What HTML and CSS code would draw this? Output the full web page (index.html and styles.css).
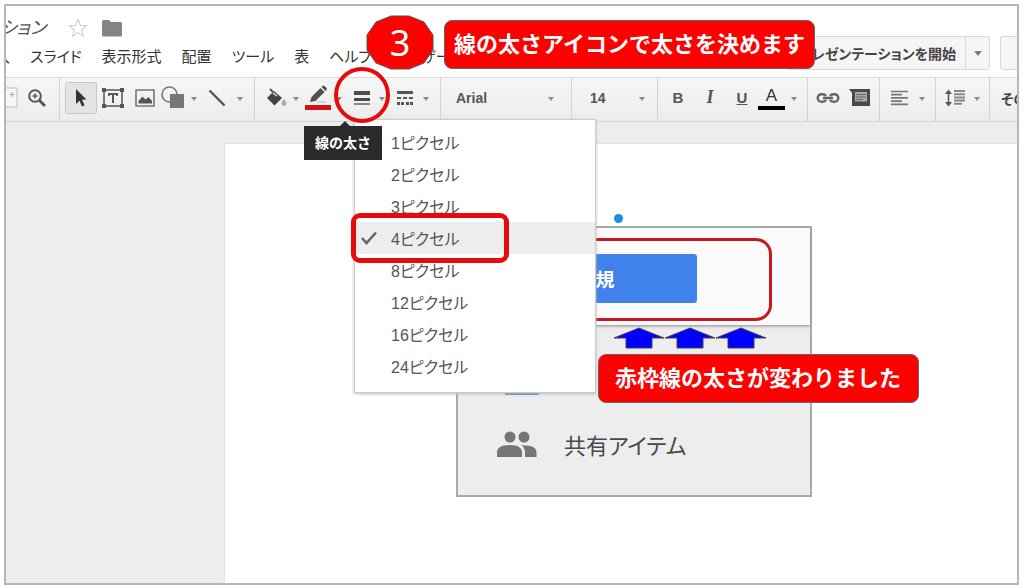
FILE: index.html
```html
<!DOCTYPE html>
<html lang="ja">
<head>
<meta charset="utf-8">
<title>線の太さ</title>
<link rel="stylesheet" href="styles.css">
</head>
<body>
<svg class="defs" aria-hidden="true">
  <symbol id="caret" viewBox="0 0 6 4"><path d="M0 0h6L3 4z" fill="#8a8a8a"/></symbol>
</svg>
<main class="frame">
  <header class="header">
    <div class="header-left">
      <div class="title-row">
        <div class="title"><span>ション</span></div>
        <button class="plain" aria-label="スター"><svg width="20" height="20" viewBox="0 0 20 20"><path d="M10 1.5l2.3 5.8 6.200.5-4.800 4 1.500 6.100L10 14.600 4.800 17.900l1.500-6.100-4.800-4 6.200-.5z" fill="#fff" stroke="#cfcfcf" stroke-width="1.200"/></svg></button>
        <button class="plain" aria-label="フォルダ"><svg width="20" height="18" viewBox="0 0 20 18"><path d="M0 2.500Q0 1 1.500 1H7l2 2h9.500Q20 3 20 4.500V16q0 1.500-1.500 1.500h-17Q0 17.500 0 16z" fill="#848484"/></svg></button>
      </div>
      <nav class="menubar">
        <button class="menu-clip"><span>入</span></button>
        <button>スライド</button>
        <button>表示形式</button>
        <button>配置</button>
        <button>ツール</button>
        <button>表</button>
        <button>ヘルプ</button>
        <button>ユーザー</button>
      </nav>
    </div>
    <div class="actions">
      <div class="split">
        <button class="present">プレゼンテーションを開始</button>
        <button class="present-more" aria-label="その他の開始方法"><svg width="8" height="5" viewBox="0 0 6 4"><path d="M0 0h6L3 4z" fill="#777"/></svg></button>
      </div>
      <button class="share" aria-label="共有"></button>
    </div>
  </header>

  <div class="toolbar" role="toolbar">
    <div class="group g-zoom">
      <button class="tool w-edge" aria-label="新しいスライド"><svg width="12" height="22" viewBox="0 0 12 22"><path d="M-1 1h12v19H-1" fill="#f7f7f7" stroke="#bdbdbd"/><path d="M6 5v5M3.500 7.500h5" stroke="#aaa"/></svg></button>
      <button class="tool" aria-label="ズーム"><svg width="20" height="20" viewBox="0 0 20 20" fill="none" stroke="#555"><circle cx="8" cy="8" r="5.800" stroke-width="2"/><path d="M12.500 12.500L18 18" stroke-width="2.800"/><path d="M8 5.500v5M5.500 8h5" stroke-width="1.500"/></svg></button>
    </div>
    <div class="group g-insert">
      <button class="tool selected" aria-label="選択"><svg width="14" height="20" viewBox="0 0 14 20"><path d="M2 1v15l3.500-3.200L8 18.500l2.600-1.200L8 11.800l4.500-.3z" fill="#333"/></svg></button>
      <button class="tool" aria-label="テキスト ボックス"><svg width="24" height="22" viewBox="0 0 24 22"><path d="M3 3h18v16H3z" fill="none" stroke="#555" stroke-width="1.500"/><g fill="#555"><path d="M1 1h4v4H1zM19 1h4v4h-4zM1 17h4v4H1zM19 17h4v4h-4z"/><path d="M7 6h10v3h-1.500l-.5-1h-2v8h-2V8H9l-.5 1H7z"/></g></svg></button>
      <button class="tool" aria-label="画像"><svg width="20" height="18" viewBox="0 0 20 18"><path d="M1 1h18v16H1z" fill="none" stroke="#777" stroke-width="1.600"/><path d="M3.500 14.500V12l4-4.500 3 3 3-2.500 3.500 4v2.500z" fill="#555"/></svg></button>
      <button class="tool has-caret w-shape" aria-label="図形"><svg width="24" height="23" viewBox="0 0 24 23"><path d="M9 8h14v14H9z" fill="#777"/><circle cx="8.500" cy="8.500" r="7.500" fill="none" stroke="#777" stroke-width="1.600"/></svg><svg class="caret"><use href="#caret"/></svg></button>
      <button class="tool has-caret w-line" aria-label="線"><svg width="20" height="20" viewBox="0 0 20 20"><path d="M2.500 2.500l15 15" stroke="#555" stroke-width="2.400"/></svg><svg class="caret"><use href="#caret"/></svg></button>
    </div>
    <div class="group g-style">
      <button class="tool has-caret w-fill" aria-label="塗りつぶし"><svg width="22" height="20" viewBox="0 0 22 20"><path d="M5 1l3 3" stroke="#555" stroke-width="2"/><path d="M9 3l8 7-7.500 7.500L2 10z" fill="#444"/><path d="M8 5l4 3" stroke="#eee" stroke-width="1.300"/><path d="M19 11q2.500 3 2.500 4.500a2.400 2.400 0 0 1-4.800 0Q16.700 14 19 11z" fill="#aaa"/></svg><svg class="caret"><use href="#caret"/></svg></button>
      <button class="tool has-caret w-pen" aria-label="線の色"><svg width="26" height="26" viewBox="0 0 26 26"><path d="M5 17l1.500-5L15.500 3l4 4-9 9z" fill="#505050"/><path d="M16.500 2l1-1q1-.8 2 0l2 2q.8 1 0 2l-1 1z" fill="#505050"/><path d="M12 17h9" stroke="#bbb"/><path d="M0 20h26v5H0z" fill="#cf1517"/></svg><svg class="caret"><use href="#caret"/></svg></button>
      <button class="tool has-caret w-weight" aria-label="線の太さ"><svg width="18" height="16" viewBox="0 0 18 16" fill="#4c4c4c"><path d="M1 1h16v4H1zM1 8h16v3H1z"/><path d="M1 13h16v2H1z" fill="#888"/></svg><svg class="caret"><use href="#caret"/></svg></button>
      <button class="tool has-caret w-dash" aria-label="線の種類"><svg width="18" height="16" viewBox="0 0 18 16" fill="#555"><path d="M1 1h16v3H1zM1 7h4v2H1zM7 7h4v2H7zM13 7h4v2h-4zM1 12h3v3H1zM5 12h3v3H5zM10 12h3v3h-3zM14 12h3v3h-3z"/></svg><svg class="caret"><use href="#caret"/></svg></button>
    </div>
    <div class="group g-font"><select aria-label="フォント"><option>Arial</option></select><svg class="caret"><use href="#caret"/></svg></div>
    <div class="group g-size"><select aria-label="フォント サイズ"><option>14</option></select><svg class="caret"><use href="#caret"/></svg></div>
    <div class="group g-text">
      <button class="tool letter bold">B</button>
      <button class="tool letter italic">I</button>
      <button class="tool letter underline">U</button>
      <button class="tool has-caret w-color" aria-label="テキストの色"><span class="color-a">A</span><svg class="caret"><use href="#caret"/></svg></button>
    </div>
    <div class="group g-link">
      <button class="tool" aria-label="リンク"><svg width="24" height="12" viewBox="0 0 24 12" fill="none" stroke="#666" stroke-width="2.400"><path d="M10 4Q9 2.200 6.500 2.200H5.500a3.800 3.800 0 0 0 0 7.600h1Q9 9.800 10 8M14 4q1-1.800 3.500-1.800h1a3.800 3.800 0 0 1 0 7.600h-1Q15 9.800 14 8M7 6h10"/></svg></button>
      <button class="tool" aria-label="コメント"><svg width="22" height="20" viewBox="0 0 22 20"><path d="M0 1h21v17H3V5z" fill="#4a4a4a"/><path d="M6 4h12v9.500H6z" fill="#aaa"/><path d="M7 6.500h10M7 9h10M7 11.500h7" stroke="#666"/></svg></button>
    </div>
    <div class="group g-align"><button class="tool has-caret w-align" aria-label="配置"><svg width="20" height="16" viewBox="0 0 20 16" stroke="#777" stroke-width="1.700"><path d="M1 1.500h17M1 4.700h11M1 7.900h17M1 11.100h11M1 14.300h17"/></svg><svg class="caret"><use href="#caret"/></svg></button></div>
    <div class="group g-space"><button class="tool has-caret w-align" aria-label="行間"><svg width="20" height="18" viewBox="0 0 20 18"><path d="M3.500 3v12" stroke="#555" stroke-width="1.500"/><path d="M0 5l3.500-4.500L7 5zM0 13l3.500 4.500L7 13z" fill="#555"/><path d="M9 2h11M9 5.200h11M9 8.400h11M9 11.600h11M9 14.800h8" stroke="#888" stroke-width="2"/></svg><svg class="caret"><use href="#caret"/></svg></button></div>
    <div class="group g-more"><button class="more">その他</button></div>
  </div>

  <section class="workspace">
    <div class="slide">
      <div class="handle"></div>
      <div class="picture">
        <div class="picture-top">
          <button class="new-button">新規</button>
        </div>
        <div class="picture-list">
          <svg class="drive" width="34" height="18" viewBox="0 0 34 18"><path d="M0 18V8h34v10z" fill="#4a86cf"/></svg>
          <div class="shared">
            <svg width="42" height="28" viewBox="0 0 42 28" fill="#767676"><circle cx="14" cy="7" r="5.500"/><circle cx="28" cy="7" r="5.500"/><path d="M1 27v-4.500Q1 15 13.500 15T26 22.500V27zM25.500 15.200Q40.500 15 40.500 22.500V27H29v-4.500q0-4.500-3.500-7.300z"/></svg>
            <span>共有アイテム</span>
          </div>
        </div>
        <div class="outline"></div>
      </div>
    </div>
  </section>

  <div class="weights" role="menu">
    <button role="menuitem">1ピクセル</button>
    <button role="menuitem">2ピクセル</button>
    <button role="menuitem">3ピクセル</button>
    <button role="menuitem" class="checked"><svg class="check" width="16" height="14" viewBox="0 0 16 14"><path d="M1 7l4.500 5L15 1.500" fill="none" stroke="#666" stroke-width="2.600"/></svg>4ピクセル</button>
    <button role="menuitem">8ピクセル</button>
    <button role="menuitem">12ピクセル</button>
    <button role="menuitem">16ピクセル</button>
    <button role="menuitem">24ピクセル</button>
  </div>
  <div class="tooltip" role="tooltip">線の太さ</div>

  <div class="mark ring"></div>
  <div class="mark box"></div>
  <div class="step">
    <svg width="68" height="55" viewBox="0 0 68 55"><path d="M25 1h18l15 6 9 13v15l-9 13-15 6H25l-15-6-9-13V20l9-13z" fill="#fd0000" stroke="#555"/></svg>
    <span>3</span>
  </div>
  <p class="callout callout-icon">線の太さアイコンで太さを決めます</p>
  <svg class="arrows" width="154" height="22" viewBox="0 0 154 22" fill="#0000fe" stroke="#444" stroke-width="1"><path d="M26 1L51 11H39v10H13V11H1z"/><path d="M77 1l25 10H90v10H64V11H52z"/><path d="M128 1l25 10h-12v10h-26V11h-12z"/></svg>
  <p class="callout callout-result">赤枠線の太さが変わりました</p>
</main>
</body>
</html>
```

FILE: styles.css
```css
* { box-sizing: border-box; }

body {
  margin: 0;
  padding: 4px 5px 3px 4px;
  min-height: 100vh;
  display: flex;
  background: #fff;
  color: #333;
  font-family: "Liberation Sans", "Noto Sans CJK JP", sans-serif;
  font-size: 15px;
}

button, select {
  margin: 0;
  padding: 0;
  border: 0;
  background: none;
  color: inherit;
  font: inherit;
  white-space: nowrap;
}

svg { display: block; flex: none; }
.defs { position: absolute; width: 0; height: 0; }

.frame {
  position: relative;
  flex: 1;
  min-width: 0;
  display: flex;
  flex-direction: column;
  border: 2px solid #b7b7b7;
  overflow: hidden;
}

/* Header */
.header {
  display: flex;
  justify-content: space-between;
  padding: 12px 0 7px;
  font-feature-settings: "palt";
}
.header-left { display: flex; flex-direction: column; gap: 7px; }
.title-row { display: flex; align-items: center; gap: 14px; height: 20px; }
.title {
  display: flex;
  justify-content: flex-end;
  width: 48px;
  padding-right: 8px;
  overflow: hidden;
  color: #555;
  font-size: 18px;
  font-style: italic;
  line-height: 24px;
  white-space: nowrap;
}
.menubar { display: flex; gap: 20px; height: 24px; line-height: 24px; }
.menu-clip { display: flex; justify-content: flex-end; width: 4px; overflow: hidden; }

.actions { display: flex; align-items: flex-start; gap: 10px; padding-top: 18px; }
.split { display: flex; }
.present, .present-more, .share {
  height: 34px;
  border: 1px solid #d9d9d9;
  background: #f5f5f5;
}
.present {
  padding: 0 9px 0 12px;
  border-radius: 3px 0 0 3px;
  color: #444;
  font-size: 14px;
  font-weight: bold;
}
.present-more {
  display: grid;
  place-items: center;
  width: 24px;
  border-left: 0;
  border-radius: 0 3px 3px 0;
}
.share { width: 17px; border-right: 0; border-radius: 3px 0 0 3px; }

/* Toolbar */
.toolbar {
  display: flex;
  height: 45px;
  border-top: 1px solid #dcdcdc;
  border-bottom: 1px solid #d5d5d5;
  background: linear-gradient(#f6f6f6, #ececec);
}
.group {
  display: flex;
  flex: none;
  align-items: center;
  padding-bottom: 4px;
  border-right: 1px solid #d2d2d2;
}
.tool {
  display: flex;
  flex: none;
  align-items: center;
  justify-content: center;
  width: 32px;
  height: 32px;
}
.selected { border: 1px solid #c9c9c9; border-radius: 2px; background: #e4e4e4; }
.has-caret { justify-content: space-between; }
.caret { width: 6px; height: 4px; margin-top: 2px; }
.g-zoom { width: 54px; gap: 4px; }
.w-edge { width: 11px; justify-content: flex-start; }
.g-insert { width: 195px; padding-left: 5px; }
.w-shape { width: 36px; }
.w-line { width: 36px; margin-left: 10px; }
.g-style { width: 186px; padding-left: 10px; gap: 6px; }
.w-fill { width: 34px; }
.w-pen { width: 37px; }
.w-weight { width: 32px; margin-left: 5px; }
.w-dash { width: 33px; margin-left: 5px; }
.g-font { width: 131px; padding: 0 17px 4px 15px; }
.g-size { width: 86px; padding: 0 12px 4px 18px; }
.g-font select, .g-size select {
  flex: 1;
  min-width: 0;
  appearance: none;
  color: #555;
  font-size: 14px;
  font-weight: bold;
}
.g-text { width: 150px; padding-left: 4px; }
.letter { color: #555; font-size: 15px; font-weight: bold; }
.italic { font-family: "Liberation Serif", serif; font-style: italic; font-size: 18px; }
.underline { text-decoration: underline; }
.w-color { width: 39px; }
.color-a {
  width: 27px;
  border-bottom: 4px solid #000;
  font-size: 17px;
  line-height: 20px;
  text-align: center;
}
.g-link { width: 72px; padding-left: 4px; }
.g-align { width: 56px; padding-left: 10px; }
.g-space { width: 54px; padding-left: 9px; }
.w-align { width: 35px; }
.g-more { flex: 1; min-width: 0; padding-left: 11px; border: 0; overflow: hidden; }
.more { color: #444; font-size: 14px; font-weight: bold; font-feature-settings: "palt"; }

/* Slide area */
.workspace {
  flex: 1;
  display: flex;
  padding: 22px 0 0 219px;
  background: #ededed;
}
.slide {
  position: relative;
  flex: 1;
  background: #fff;
  box-shadow: 0 0 2px #c8c8c8;
}
.handle {
  position: absolute;
  left: 389px;
  top: 70px;
  width: 9px;
  height: 9px;
  border-radius: 50%;
  background: #1592df;
}
.picture {
  position: absolute;
  left: 231px;
  top: 82px;
  width: 356px;
  border: 2px solid #aaa;
  background: #ededed;
}
.picture-top {
  display: flex;
  align-items: center;
  height: 97px;
  padding: 4px 0 0 36px;
  background: #fafafa;
  box-shadow: 0 1px 3px #888;
}
.new-button {
  width: 203px;
  height: 49px;
  border-radius: 3px;
  background: #4081ec;
  color: #fff;
  font-size: 19px;
  font-weight: bold;
}
.picture-list { display: flex; flex-direction: column; height: 170px; padding: 52px 0 0 38px; }
.drive { margin-left: 9px; margin-bottom: 33px; }
.shared {
  display: flex;
  align-items: center;
  gap: 26px;
  color: #484848;
  font-size: 22px;
  font-feature-settings: "palt";
}
.outline {
  position: absolute;
  left: 20px;
  right: 38px;
  top: 10px;
  height: 83px;
  border: 3px solid #c5191f;
  border-radius: 16px;
}

/* Line weight menu */
.weights {
  position: absolute;
  left: 348px;
  top: 113px;
  width: 242px;
  display: flex;
  flex-direction: column;
  padding: 6px 0 10px;
  border: 1px solid #ccc;
  background: #fff;
  box-shadow: 0 1px 3px #bbb;
}
.weights button {
  display: flex;
  align-items: center;
  height: 32px;
  padding-left: 36px;
  color: #555;
  font-size: 16px;
  font-feature-settings: "palt";
}
.weights .checked { padding-left: 6px; gap: 14px; background: #ededed; }

.tooltip {
  position: absolute;
  left: 298px;
  top: 120px;
  padding: 0 11px;
  background: #2a2a2a;
  color: #fff;
  font-size: 14px;
  font-weight: bold;
  line-height: 34px;
}
.tooltip::before {
  content: "";
  position: absolute;
  left: 35px;
  top: -5px;
  border: 6px solid transparent;
  border-top: 0;
  border-bottom-color: #2a2a2a;
}

/* Instruction marks */
.mark { position: absolute; border-style: solid; border-color: #e60a0d; pointer-events: none; }
.ring { left: 328px; top: 61px; width: 56px; height: 56px; border-width: 4px; border-radius: 50%; }
.box { left: 345px; top: 207px; width: 158px; height: 50px; border-width: 5px; border-radius: 9px; }
.step { position: absolute; left: 360px; top: 9px; display: grid; place-items: center; }
.step > * { grid-area: 1 / 1; }
.step span { color: #fff; font-family: "Noto Sans", sans-serif; font-size: 36px; line-height: 40px; }
.callout {
  position: absolute;
  margin: 0;
  padding: 0 8px;
  border: 1px solid #666;
  border-radius: 8px;
  background: #fd0000;
  color: #fff;
  font-size: 22px;
  font-weight: bold;
  line-height: 47px;
  white-space: nowrap;
}
.callout-icon { left: 438px; top: 14px; width: 371px; text-align: center; }
.callout-result { left: 592px; top: 348px; width: 321px; padding-left: 16px; }
.arrows { position: absolute; left: 607px; top: 321px; }
```
